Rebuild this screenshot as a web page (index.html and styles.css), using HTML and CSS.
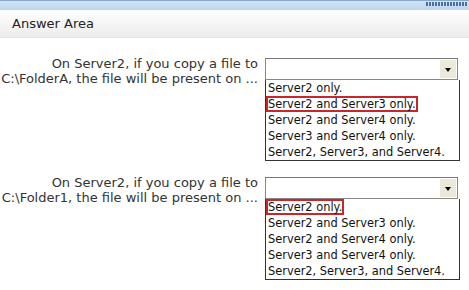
FILE: index.html
```html
<!DOCTYPE html>
<html lang="en">
<head>
  <meta charset="UTF-8" />
  <title>Answer Area</title>
  <link rel="stylesheet" href="styles.css">
</head>
<body>
  <div class="topbar"><span class="grip"></span></div>
  <div class="header">Answer Area</div>

  <div class="question">
    <div class="label">On Server2, if you copy a file to<br>C:\FolderA, the file will be present on ...</div>
    <div class="field">
      <div class="select"><span class="arrow"></span></div>
      <ul class="list">
        <li>Server2 only.</li>
        <li class="picked">Server2 and Server3 only.</li>
        <li>Server2 and Server4 only.</li>
        <li>Server3 and Server4 only.</li>
        <li>Server2, Server3, and Server4.</li>
      </ul>
    </div>
  </div>

  <div class="question">
    <div class="label">On Server2, if you copy a file to<br>C:\Folder1, the file will be present on ...</div>
    <div class="field">
      <div class="select"><span class="arrow"></span></div>
      <ul class="list">
        <li class="picked">Server2 only.</li>
        <li>Server2 and Server3 only.</li>
        <li>Server2 and Server4 only.</li>
        <li>Server3 and Server4 only.</li>
        <li>Server2, Server3, and Server4.</li>
      </ul>
    </div>
  </div>
</body>
</html>
```

FILE: styles.css
```css
body {
  margin: 0;
  font-family: "DejaVu Sans", Verdana, sans-serif;
  font-size: 12px;
  color: #222;
  background: #fff;
}

.topbar {
  height: 9px;
  border-top: 1px solid #8aa9c9;
  background: linear-gradient(#cfe2f5, #bcd6f0);
  position: relative;
}

.grip {
  position: absolute;
  right: 1px;
  top: 1px;
  width: 42px;
  height: 4px;
  background: repeating-linear-gradient(90deg, #4a6f9c 0 2px, #cfe2f5 2px 3px);
}

.header {
  height: 27px;
  line-height: 27px;
  padding-left: 12px;
  font-size: 13px;
  color: #222;
  background: linear-gradient(#ffffff, #ececec);
  border-bottom: 1px solid #e4e4e4;
}

.question {
  display: flex;
  align-items: flex-start;
  margin-top: 20px;
}

.question + .question {
  margin-top: 16px;
}

.label {
  width: 258px;
  text-align: right;
  font-size: 13px;
  line-height: 15px;
  margin-top: -2px;
  color: #333;
  white-space: nowrap;
}

.field {
  margin-left: 7px;
  width: 194px;
}

.select {
  height: 20px;
  border: 1px solid #888;
  border-top-color: #777;
  background: #fff;
  position: relative;
  width: 191px;
}

.arrow {
  position: absolute;
  right: 1px;
  top: 1px;
  width: 16px;
  height: 18px;
  background: #ece9d8;
  border-left: 1px solid #fff;
}

.arrow::after {
  content: "";
  position: absolute;
  left: 5px;
  top: 8px;
  border-left: 3px solid transparent;
  border-right: 3px solid transparent;
  border-top: 4px solid #000;
}

.list {
  list-style: none;
  margin: 0;
  padding: 0;
  border: 1px solid #333;
  border-top: none;
  width: 193px;
}

.list li {
  height: 16px;
  line-height: 16px;
  padding-left: 2px;
  font-size: 11.4px;
  white-space: nowrap;
  color: #111;
}

.list li.picked {
  display: table;
  box-shadow: inset 0 0 0 2px #c8262d;
  padding-right: 2px;
}
```
